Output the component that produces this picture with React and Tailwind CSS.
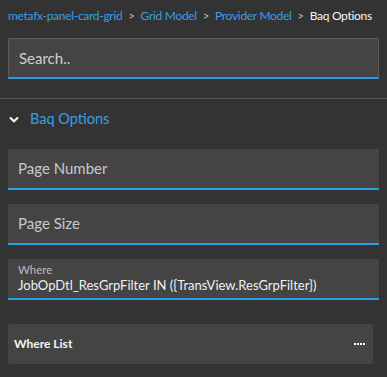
import React from "react";

function Field({ label, value }) {
  if (value) {
    return (
      <div className="mx-2 h-[41px] bg-[#444444] border-b-2 border-[#2a9de4] pl-[10px] flex flex-col justify-center">
        <div className="text-[11.5px] leading-[14px] text-[#bdbdbd]">{label}</div>
        <div className="text-[13px] leading-[17px] text-[#f0f0f0] whitespace-nowrap">{value}</div>
      </div>
    );
  }
  return (
    <div className="mx-2 h-[41px] bg-[#444444] border-b-2 border-[#2a9de4] pl-[10px] flex items-center">
      <span className="text-[15px] text-[#c9c9c9]">{label}</span>
    </div>
  );
}

export default function App() {
  return (
    <div
      className="w-[387px] h-[377px] bg-[#333333] overflow-hidden"
      style={{ fontFamily: "Lato, 'Noto Sans', sans-serif" }}
    >
      <div className="px-2 pt-[8px] h-[30px] text-[12px] tracking-[-0.3px] leading-[16px] flex items-start gap-[6px] whitespace-nowrap">
        <span className="text-[#3a9ee6]">metafx-panel-card-grid</span>
        <span className="text-[#bdbdbd] text-[11px]">&gt;</span>
        <span className="text-[#3a9ee6]">Grid Model</span>
        <span className="text-[#bdbdbd] text-[11px]">&gt;</span>
        <span className="text-[#3a9ee6]">Provider Model</span>
        <span className="text-[#bdbdbd] text-[11px]">&gt;</span>
        <span className="text-[#f5f5f5]">Baq Options</span>
      </div>
      <div className="mx-2 mt-[8px] h-[41px] bg-[#444444] border border-[#5c5c5c] border-b-2 border-b-[#2a9de4] pl-[10px] flex items-center">
        <span className="text-[15px] text-[#cfcfcf]">Search..</span>
      </div>
      <div className="mt-[19px] border-t border-[#555555]" />
      <div className="h-[40px] flex items-center pl-[9px] gap-[11px]">
        <svg width="10" height="7" viewBox="0 0 10 7">
          <path d="M1 1.5 L5 5.2 L9 1.5" stroke="#f5f5f5" strokeWidth="2.2" fill="none" />
        </svg>
        <span className="text-[14.5px] text-[#3a9ee6]">Baq Options</span>
      </div>
      <div className="mt-[10px] flex flex-col gap-[14px]">
        <Field label="Page Number" />
        <Field label="Page Size" />
        <Field label="Where" value="JobOpDtl_ResGrpFilter IN ({TransView.ResGrpFilter})" />
      </div>
      <div className="ml-2 mr-[14px] mt-[24px] h-[40px] rounded-[3px] bg-[#444444] flex items-center justify-between pl-[6px] pr-[8px]">
        <span className="text-[12px] font-bold text-[#f5f5f5]">Where List</span>
        <span className="flex gap-[1px]">
          <span className="w-[2px] h-[2px] bg-white" />
          <span className="w-[2px] h-[2px] bg-white" />
          <span className="w-[2px] h-[2px] bg-white" />
          <span className="w-[2px] h-[2px] bg-white" />
        </span>
      </div>
    </div>
  );
}
